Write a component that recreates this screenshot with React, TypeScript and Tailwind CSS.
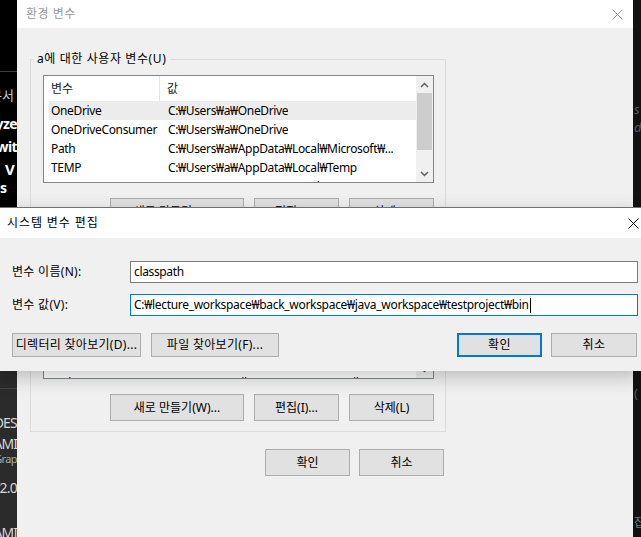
const font = "font-['Noto_Sans','Noto_Sans_CJK_KR',sans-serif]";

function CloseX({ color }: { color: string }) {
  return (
    <svg width="11" height="11" viewBox="0 0 11 11">
      <path d="M0.5 0.5 L10.5 10.5 M10.5 0.5 L0.5 10.5" stroke={color} strokeWidth="1" fill="none" />
    </svg>
  );
}

function Chevron({ up }: { up?: boolean }) {
  return (
    <svg width="9" height="6" viewBox="0 0 9 6">
      <path d={up ? "M1 5 L4.5 1.5 L8 5" : "M1 1 L4.5 4.5 L8 1"} stroke="#606060" strokeWidth="1.5" fill="none" />
    </svg>
  );
}

function Btn({ label, w }: { label: string; w: string }) {
  return (
    <div
      className={`${w} h-[27px] flex items-center justify-center bg-[#e1e1e1] border border-[#adadad] text-[12px] text-black whitespace-nowrap`}
    >
      {label}
    </div>
  );
}

type Row = { name: string; value: string };

function VarList({ rows, selected }: { rows: Row[]; selected?: number }) {
  return (
    <div className="ml-[10px] mt-[8px] w-[391px] h-[108px] border border-[#828790] bg-white flex overflow-hidden">
      <div className="flex-1 flex flex-col overflow-hidden">
        <div className="h-[25px] shrink-0 flex items-center text-[12px] text-[#222]">
          <div className="w-[116px] pl-[7px] h-full flex items-center border-r border-[#e5e5e5]">변수</div>
          <div className="pl-[7px]">값</div>
        </div>
        {rows.map((r, i) => (
          <div
            key={r.name}
            className={`ml-[5px] h-[19px] shrink-0 flex items-center text-[12px] tracking-[-0.35px] text-black whitespace-nowrap ${
              i === selected ? "bg-[#ececec]" : ""
            }`}
          >
            <div className="w-[119px] pl-[2px]">{r.name}</div>
            <div className="overflow-hidden">{r.value}</div>
          </div>
        ))}
      </div>
      <div className="w-[17px] shrink-0 bg-[#f0f0f0] flex flex-col items-center">
        <div className="h-[17px] flex items-center justify-center">
          <Chevron up />
        </div>
        <div className="w-[15px] h-[57px] bg-[#cdcdcd]" />
        <div className="flex-1" />
        <div className="h-[17px] flex items-center justify-center">
          <Chevron />
        </div>
      </div>
    </div>
  );
}

function Group({ legend, rows, selected }: { legend: string; rows: Row[]; selected?: number }) {
  return (
    <fieldset className="ml-[13px] w-[416px] h-[185px] border border-[#dcdcdc] pl-[2px]">
      <legend className="px-[4px] text-[12px] leading-[16px] tracking-[0.6px] text-black">{legend}</legend>
      <VarList rows={rows} selected={selected} />
      <div className="mt-[15px] w-[401px] flex justify-end gap-[10px]">
        <Btn label="새로 만들기(W)..." w="w-[134px]" />
        <Btn label="편집(I)..." w="w-[85px]" />
        <Btn label="삭제(L)" w="w-[85px]" />
      </div>
    </fieldset>
  );
}

const userRows: Row[] = [
  { name: "OneDrive", value: "C:₩Users₩a₩OneDrive" },
  { name: "OneDriveConsumer", value: "C:₩Users₩a₩OneDrive" },
  { name: "Path", value: "C:₩Users₩a₩AppData₩Local₩Microsoft₩..." },
  { name: "TEMP", value: "C:₩Users₩a₩AppData₩Local₩Temp" },
  { name: "TMP", value: "C:₩Users₩a₩AppData₩Local₩Temp" },
];

const sysRows: Row[] = [
  { name: "ComSpec", value: "C:₩WINDOWS₩system32₩cmd.exe" },
  { name: "DriverData", value: "C:₩Windows₩System32₩Drivers₩DriverData" },
  { name: "JAVA_HOME", value: "C:₩Program Files₩Java₩jdk-11" },
  { name: "NUMBER_OF_PROCESSORS", value: "8" },
  { name: "Path", value: "C:₩Program Files (x86)₩Common Files₩Ora..." },
];

// words of the page behind, cut off by the dialog's left edge
function Clip({ text, cls }: { text: string; cls: string }) {
  return <div className={`flex whitespace-nowrap ${cls}`}>{text}</div>;
}

function LeftStrip() {
  return (
    <div className="w-[17px] shrink-0 flex flex-col overflow-hidden">
      <div className="h-[300px] shrink-0 bg-black flex flex-col">
        <div className="h-[72px] shrink-0 border-b border-[#3a3a3a]" />
        <Clip text="문서" cls="justify-end mt-[13px] pr-[3px] text-[13px] leading-[20px] text-[#c8c8c8]" />
        <Clip text="yze" cls="justify-end mt-[8px] text-[14px] leading-[22px] tracking-[-0.6px] font-bold text-white" />
        <Clip text="wit" cls="justify-end mt-[1px] text-[14px] leading-[22px] tracking-[-0.6px] font-bold text-white" />
        <Clip text="V" cls="pl-[5px] text-[15px] leading-[22px] font-bold text-white" />
        <Clip text="s" cls="-mt-[3px] text-[14px] leading-[22px] font-bold text-white" />
      </div>
      <div className="flex-1 bg-[#2b2b2b] flex flex-col">
        <div className="h-[89px] shrink-0 border-b border-[#444]" />
        <Clip text="DES" cls="justify-end mt-[24px] text-[14px] leading-[20px] tracking-[-0.8px] text-[#d6d6d6]" />
        <Clip text="LAMI" cls="justify-end mt-[3px] text-[14px] leading-[16px] tracking-[-1px] text-[#d6d6d6]" />
        <Clip text="Grap" cls="justify-end text-[11px] leading-[14px] tracking-[-0.6px] text-[#aaa]" />
        <Clip text="v2.0" cls="justify-end mt-[12px] text-[14px] leading-[20px] tracking-[-0.8px] text-[#d6d6d6]" />
        <Clip text="LAMI" cls="justify-end mt-[25px] text-[14px] leading-[20px] tracking-[-1px] text-[#d6d6d6]" />
      </div>
    </div>
  );
}

function RightStrip() {
  return (
    <div className="w-[8px] shrink-0 flex flex-col overflow-hidden bg-[#121212]">
      <div className="mt-[100px] pl-[1px] text-[13px] italic text-[#5a5a5a] leading-[18px]">s</div>
      <div className="pl-[1px] text-[13px] italic text-[#5a5a5a] leading-[18px]">d</div>
      <div className="mt-[248px] pl-[1px] text-[13px] text-[#5a5a5a]">(</div>
      <div className="mt-[110px] pl-[1px] text-[12px] text-[#777] whitespace-nowrap">잡</div>
    </div>
  );
}

function EnvDialog() {
  return (
    <div className="w-[616px] shrink-0 flex flex-col bg-[#f0f0f0]">
      <div className="h-[28px] shrink-0 bg-white flex items-center justify-between pl-[9px] pr-[10px]">
        <span className="text-[12px] tracking-[0.5px] text-[#999]">환경 변수</span>
        <CloseX color="#9a9a9a" />
      </div>
      <div className="pt-[23px] flex flex-col gap-[11px]">
        <Group legend="a에 대한 사용자 변수(U)" rows={userRows} selected={0} />
        <Group legend="시스템 변수(S)" rows={sysRows} />
      </div>
      <div className="mt-[17px] ml-[13px] w-[414px] flex justify-end gap-[9px]">
        <Btn label="확인" w="w-[85px]" />
        <Btn label="취소" w="w-[85px]" />
      </div>
    </div>
  );
}

function EditDialog() {
  return (
    <div className="absolute left-0 top-[207px] w-[641px] h-[164px] flex flex-col border-t border-[#707070] bg-[#f0f0f0] shadow-[0_6px_18px_rgba(0,0,0,0.22)]">
      <div className="h-[30px] shrink-0 bg-white flex items-center justify-between pl-[7px] pr-[2px]">
        <span className="text-[12px] tracking-[0.9px] text-black">시스템 변수 편집</span>
        <CloseX color="#000" />
      </div>
      <div className="pt-[23px] pl-[12px] flex flex-col">
        <div className="flex items-center h-[22px]">
          <div className="w-[118px] text-[12px] tracking-[0.3px] text-black">변수 이름(N):</div>
          <div className="w-[508px] h-[22px] bg-white border border-[#7a7a7a] flex items-center pl-[3px] text-[12px] tracking-[-0.35px] text-black">
            classpath
          </div>
        </div>
        <div className="mt-[11px] flex items-center h-[22px]">
          <div className="w-[118px] text-[12px] tracking-[0.3px] text-black">변수 값(V):</div>
          <div className="w-[508px] h-[22px] bg-white border border-[#0078d7] flex items-center pl-[3px] text-[12px] tracking-[-0.3px] text-black whitespace-nowrap">
            C:₩lecture_workspace₩back_workspace₩java_workspace₩testproject₩bin
            <span className="ml-[1px] w-[1px] h-[15px] bg-black" />
          </div>
        </div>
        <div className="mt-[17px] flex items-center h-[24px]">
          <div className="w-[129px] h-[24px] flex items-center justify-center bg-[#e1e1e1] border border-[#adadad] text-[12px] tracking-[0.3px] text-black whitespace-nowrap">
            디렉터리 찾아보기(D)...
          </div>
          <div className="ml-[10px] w-[128px] h-[24px] flex items-center justify-center bg-[#e1e1e1] border border-[#adadad] text-[12px] tracking-[0.3px] text-black whitespace-nowrap">
            파일 찾아보기(F)...
          </div>
          <div className="ml-[178px] w-[85px] h-[24px] flex items-center justify-center bg-[#e1e1e1] border-2 border-[#0078d7] text-[12px] tracking-[0.5px] text-black">
            확인
          </div>
          <div className="ml-[9px] w-[86px] h-[24px] flex items-center justify-center bg-[#e1e1e1] border border-[#adadad] text-[12px] tracking-[0.5px] text-black">
            취소
          </div>
        </div>
      </div>
    </div>
  );
}

export default function App() {
  return (
    <div className={`relative w-[641px] h-[537px] overflow-hidden flex ${font}`}>
      <LeftStrip />
      <EnvDialog />
      <RightStrip />
      <EditDialog />
    </div>
  );
}
